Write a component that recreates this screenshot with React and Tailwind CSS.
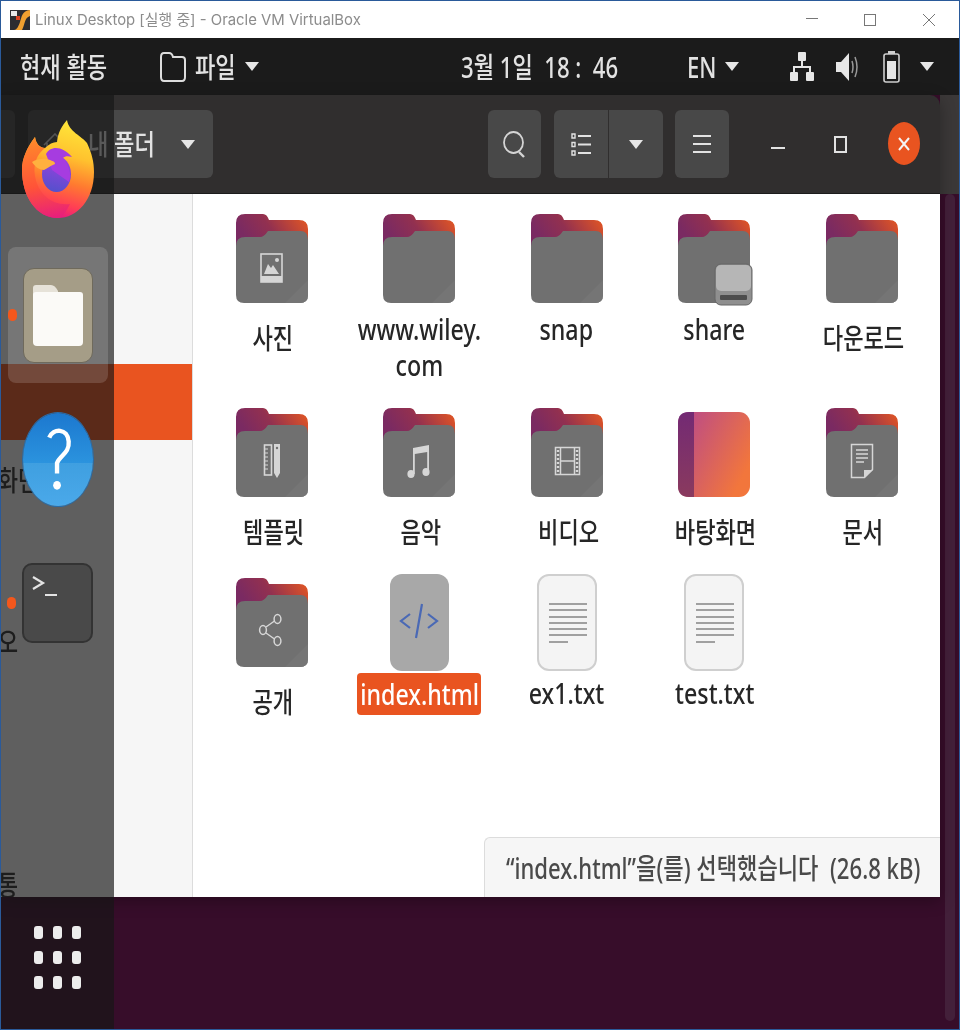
import React from 'react';

const Squeeze = ({ children, latin, className = '' }) => (
  <span className={`inline-block whitespace-pre ${latin ? 'scale-x-[0.83]' : 'scale-x-[0.79]'} ${className}`}>{children}</span>
);

const Triangle = ({ className = '' }) => (
  <svg viewBox="0 0 14 9" className={`w-[14px] h-[9px] shrink-0 ${className}`}>
    <polygon points="0,0 14,0 7,9" fill="#e6e6e6" />
  </svg>
);

const emblems = {
  picture: (
    <g>
      <rect x="25" y="40" width="21" height="28" fill="none" stroke="#d6d6d6" strokeWidth="1.6" />
      <rect x="25" y="62" width="21" height="6" fill="#d6d6d6" />
      <polygon points="28,60 32,50 35,54 37,51 43,60" fill="#d6d6d6" />
      <circle cx="41" cy="46" r="2" fill="#d6d6d6" />
    </g>
  ),
  ruler: (
    <g>
      <rect x="28.5" y="37" width="7" height="30" fill="none" stroke="#d6d6d6" strokeWidth="1.6" />
      <path d="M29 41h3M29 45h3M29 49h3M29 53h3M29 57h3M29 61h3" stroke="#d6d6d6" strokeWidth="1" />
      <path d="M38 36h6v29l-3 5-3-5z" fill="#d6d6d6" />
      <circle cx="41" cy="40" r="1.2" fill="#707070" />
    </g>
  ),
  music: (
    <g fill="#d6d6d6">
      <ellipse cx="28" cy="66" rx="3.6" ry="4" />
      <ellipse cx="43" cy="64" rx="3.6" ry="4" />
      <path d="M30 66V40l16-3v27h-1.8V44l-12.4 2v20z" />
    </g>
  ),
  film: (
    <g>
      <rect x="24.5" y="39.5" width="24" height="27" fill="none" stroke="#d6d6d6" strokeWidth="1.5" />
      <path d="M29.5 39.5v27M43.5 39.5v27M29.5 53h14" stroke="#d6d6d6" strokeWidth="1.5" />
      <path d="M27 42v22M46 42v22" stroke="#d6d6d6" strokeWidth="2.4" strokeDasharray="2 2" />
    </g>
  ),
  doc: (
    <g>
      <path d="M25.5 36.5h21v25l-8 8h-13z" fill="none" stroke="#d6d6d6" strokeWidth="1.5" />
      <path d="M38 70v-8h9z" fill="#d6d6d6" />
      <path d="M30 42h12M30 46h12M30 50h12M30 54h8" stroke="#d6d6d6" strokeWidth="1.6" />
    </g>
  ),
  share: (
    <g fill="none" stroke="#d6d6d6" strokeWidth="1.5">
      <ellipse cx="27" cy="52" rx="3.4" ry="4.4" />
      <ellipse cx="41.5" cy="41" rx="3.4" ry="4.4" />
      <ellipse cx="41.5" cy="63" rx="3.4" ry="4.4" />
      <path d="M30 49l8.5-6M30 55l8.5 6" />
    </g>
  ),
  drive: (
    <g>
      <rect x="37" y="50" width="37" height="41" rx="6" fill="#8f8f8f" stroke="#666666" strokeWidth="1" />
      <rect x="38" y="51" width="35" height="26" rx="5" fill="#b6b6b6" />
      <rect x="42" y="81" width="27" height="5" rx="1" fill="#4c4c4c" />
    </g>
  ),
};

const Folder = ({ emblem, id }) => (
  <svg viewBox="0 0 72 90" className="w-[72px] h-[90px] mt-[4px] overflow-visible">
    <defs>
      <linearGradient id={`back-${id}`} x1="0" y1="0.3" x2="1" y2="0">
        <stop offset="0" stopColor="#7a2a62" />
        <stop offset="0.4" stopColor="#923050" />
        <stop offset="1" stopColor="#ea5a1f" />
      </linearGradient>
    </defs>
    <path d="M0 9Q0 0 9 0H27Q31 0 33 6H63Q72 6 72 15V32H0Z" fill={`url(#back-${id})`} />
    <path d="M0 32Q0 23 9 23H24Q28 23 32 17H63Q72 16 72 26V81Q72 89 64 89H8Q0 89 0 81Z" fill="#707070" />
    <path d="M72 66V81Q72 89 64 89H49Z" fill="#757575" />
    {emblem && emblems[emblem]}
  </svg>
);

const Wallpaper = ({ id }) => (
  <svg viewBox="0 0 72 85" className="w-[72px] h-[85px] mt-[8px]">
    <defs>
      <linearGradient id={id} x1="0" y1="0" x2="1" y2="0.6">
        <stop offset="0" stopColor="#b5468f" />
        <stop offset="1" stopColor="#f2763c" />
      </linearGradient>
      <linearGradient id={`${id}-b`} x1="0" y1="0" x2="0" y2="1">
        <stop offset="0" stopColor="#732a74" />
        <stop offset="1" stopColor="#8a3a5e" />
      </linearGradient>
    </defs>
    <rect width="72" height="85" rx="11" fill={`url(#${id})`} />
    <path d="M16 0H11Q0 0 0 11V74Q0 85 11 85H16Z" fill={`url(#${id}-b)`} />
  </svg>
);

const HtmlFile = () => (
  <div className="w-[59px] h-[97px] rounded-[12px] bg-[#a8a8a8] flex items-center justify-center">
    <svg viewBox="0 0 40 36" className="w-[40px] h-[36px] -mt-[4px]" fill="none" stroke="#4a69b5" strokeWidth="2.2">
      <path d="M11 11L2 18l9 7M29 11l9 7-9 7M23 1l-6 34" />
    </svg>
  </div>
);

const TextFile = () => (
  <div className="w-[60px] h-[97px] rounded-[12px] bg-[#f4f4f4] border-2 border-[#cfcfcf] flex flex-col gap-[4.3px] pt-[27px] pl-[10px]">
    {[38, 38, 38, 38, 38, 38, 19].map((w, i) => (
      <div key={i} className="h-[2px] bg-[#a0a0a0]" style={{ width: w }} />
    ))}
  </div>
);

const Cell = ({ icon, label, ko, selected }) => (
  <div className="flex flex-col items-center">
    <div className="h-[98px] w-full flex justify-center items-start">{icon}</div>
    {selected ? (
      <div className="mt-[1px] w-[124px] h-[42px] rounded-[4px] bg-[#e95420] text-white flex items-center justify-center">
        <Squeeze latin>{label}</Squeeze>
      </div>
    ) : (
      <div className={`text-[#262626] text-center ${ko ? 'mt-[12px] ml-[3px]' : 'mt-[3px]'}`}>
        <Squeeze latin={!ko}>{label}</Squeeze>
      </div>
    )}
  </div>
);

const Firefox = () => (
  <svg viewBox="0 0 72 98" className="w-[72px] h-[98px]">
    <defs>
      <linearGradient id="ff-body" x1="0.65" y1="0" x2="0.45" y2="1">
        <stop offset="0" stopColor="#ffe83a" />
        <stop offset="0.35" stopColor="#ffc22e" />
        <stop offset="0.62" stopColor="#ff7a30" />
        <stop offset="0.85" stopColor="#ff3d55" />
        <stop offset="1" stopColor="#e31587" />
      </linearGradient>
      <linearGradient id="ff-left" x1="0.4" y1="0" x2="0.5" y2="1">
        <stop offset="0" stopColor="#ff8a2a" />
        <stop offset="0.6" stopColor="#ff5338" />
        <stop offset="1" stopColor="#e8207a" />
      </linearGradient>
      <linearGradient id="ff-globe" x1="0.6" y1="0" x2="0.4" y2="1">
        <stop offset="0" stopColor="#a23fe0" />
        <stop offset="1" stopColor="#5450cc" />
      </linearGradient>
    </defs>
    <path d="M45 0C47 12 60 16 65 23C70 34 72 42 72 52C72 80 55 98 36 98C14 98 0 76 0 50C0 38 5 28 13 17C14 24 18 28 23 28C27 24 31 22 35 22C36 12 40 6 45 0Z" fill="url(#ff-body)" />
    <path d="M13 17C14 24 18 28 23 28C15 34 11 44 13 56C16 74 30 86 48 84C44 92 40 98 36 98C14 98 0 76 0 50C0 38 5 28 13 17Z" fill="url(#ff-left)" />
    <ellipse cx="34.5" cy="54" rx="14.5" ry="18" fill="url(#ff-globe)" />
    <path d="M24 34C28 26 40 25 50 37C46 36 43 36 41 38C47 46 50 54 47 62L30 50Z" fill="#a63ce0" />
    <path d="M10 42C16 38 24 38 28 40C30 41 33 41 33 44C28 46 26 48 22 50C18 50 13 47 10 42Z" fill="#ffb03f" />
  </svg>
);

const FilesTile = () => (
  <div className="w-[70px] h-[95px] rounded-[11px] bg-[#a59d87] border border-[#6f6a5c] pt-[16px] pl-[9px]">
    <svg viewBox="0 0 50 61" className="w-[50px] h-[61px]">
      <path d="M3 0H18Q22 0 25 6V20H0V3Q0 0 3 0Z" fill="#e6e2d8" />
      <path d="M0 10Q0 7 3 7H47Q50 7 50 10V57Q50 61 46 61H4Q0 61 0 57Z" fill="#fbfaf7" />
    </svg>
  </div>
);

const HelpIcon = () => (
  <div className="w-[72px] h-[95px] rounded-[50%] overflow-hidden flex flex-col relative border border-[#2b6ca6]">
    <div className="h-[50px] bg-gradient-to-b from-[#1c78cf] to-[#2b93de]" />
    <div className="flex-1 bg-gradient-to-b from-[#3f9fe0] to-[#4aa9ea]" />
    <svg viewBox="0 0 72 95" className="absolute inset-0 w-full h-full" fill="none" stroke="#fff" strokeWidth="4.5">
      <path d="M27 25C31 15 46 15 47 29C48 41 38 43 35 51V62" />
      <ellipse cx="35" cy="74" rx="4" ry="4.5" fill="#fff" stroke="none" />
    </svg>
  </div>
);

const Terminal = () => (
  <div className="w-[71px] h-[80px] rounded-[10px] bg-[#494949] border-2 border-[#333333] pt-[10px] pl-[8px]">
    <svg viewBox="0 0 28 24" className="w-[28px] h-[24px]" fill="none" stroke="#e4e4e4" strokeWidth="2.2">
      <path d="M1 2l10 6-10 6M13 20h12" />
    </svg>
  </div>
);

const Dock = () => (
  <div className="absolute left-0 top-[94px] bottom-0 w-[113px] bg-[#161616]/[0.675] flex flex-col items-center pt-[25px] pb-[40px]">
    <Firefox />
    <div className="relative mt-[29px] w-[100px] h-[136px] rounded-[8px] bg-white/15 flex justify-center pt-[21px]">
      <FilesTile />
      <span className="absolute left-0 top-[62px] w-[9px] h-[12px] rounded-full bg-[#f4571c]" />
    </div>
    <div className="mt-[29px]"><HelpIcon /></div>
    <div className="relative mt-[56px]">
      <Terminal />
      <span className="absolute -left-[15px] top-[34px] w-[9px] h-[12px] rounded-full bg-[#f4571c]" />
    </div>
    <div className="mt-auto grid grid-cols-3 gap-x-[10px] gap-y-[12px]">
      {Array.from({ length: 9 }).map((_, i) => (
        <span key={i} className="w-[9px] h-[13px] rounded-[3px] bg-[#ececec]" />
      ))}
    </div>
  </div>
);

const HeaderButton = ({ className = '', children }) => (
  <div className={`h-[68px] bg-[#484848] flex items-center justify-center ${className}`}>{children}</div>
);

export default function App() {
  const labelFont = "font-['Noto_Sans','Noto_Sans_CJK_KR',sans-serif]";
  return (
    <div className={`relative w-[960px] h-[1030px] overflow-hidden flex flex-col border border-[#2a5a9a] bg-[#370d2a] text-[28px] leading-[36px] font-medium blur-[0.5px] ${labelFont}`}>
      {/* virtualbox title bar */}
      <div className="h-[37px] shrink-0 bg-white flex items-center pl-[9px]">
        <svg viewBox="0 0 20 20" className="w-[20px] h-[20px]">
          <rect width="20" height="20" fill="#2c2c30" />
          <path d="M20 0C12 1 12 6 10 12C9 15 7 20 4 20H12C15 15 14 8 20 6Z" fill="#f0a030" />
          <rect x="1" y="1" width="6" height="5" fill="#e8e8e8" />
          <rect x="6" y="6" width="4" height="4" fill="#d8401f" />
        </svg>
        <span className="ml-[5px] text-[14.9px] leading-[20px] font-normal text-[#8c8c8c] font-['Inter','Noto_Sans_CJK_KR',sans-serif]">Linux Desktop [실행 중] - Oracle VM VirtualBox</span>
        <svg viewBox="0 0 130 14" className="ml-auto mr-[23px] w-[130px] h-[14px]" fill="none" stroke="#777777" strokeWidth="1">
          <path d="M0 5.5H12" />
          <rect x="58.5" y="1.5" width="11" height="11" />
          <path d="M117 1l12 12M129 1l-12 12" />
        </svg>
      </div>

      {/* ubuntu top bar */}
      <div className="h-[57px] shrink-0 bg-[#1b1b1b] flex items-center text-[#e2e2e2] pl-[19px]">
        <div className="w-[140px]"><Squeeze className="origin-left">현재 활동</Squeeze></div>
        <svg viewBox="0 0 26 30" className="w-[26px] h-[30px]" fill="none" stroke="#dddddd" strokeWidth="2">
          <path d="M1 5Q1 1 4 1H9Q12 1 13 5H22Q25 5 25 8V25Q25 29 22 29H4Q1 29 1 25Z" />
        </svg>
        <div className="w-[50px] ml-[9px]"><Squeeze className="origin-left">파일</Squeeze></div>
        <Triangle />
        <div className="w-[202px]" />
        <div className="w-[226px]"><Squeeze className="origin-left">3월 1일  18 :  46</Squeeze></div>
        <div className="w-[38px]"><Squeeze className="origin-left">EN</Squeeze></div>
        <Triangle />
        <svg viewBox="0 0 24 29" className="ml-[51px] w-[24px] h-[29px]" fill="#e6e6e6">
          <rect x="8" y="0" width="8" height="9" rx="1" />
          <rect x="0" y="20" width="8" height="9" rx="1" />
          <rect x="16" y="20" width="8" height="9" rx="1" />
          <path d="M11 9h2v5h8v6h-2v-4H5v4H3v-6h8z" />
        </svg>
        <svg viewBox="0 0 22 30" className="ml-[22px] w-[22px] h-[30px]">
          <path d="M0 10H5L13 1V29L5 20H0Z" fill="#e6e6e6" />
          <path d="M16 9Q18 15 16 21M19 5Q23 15 19 25" fill="none" stroke="#9a9a9a" strokeWidth="1.5" />
        </svg>
        <svg viewBox="0 0 17 32" className="ml-[25px] w-[17px] h-[32px]">
          <rect x="5" y="0" width="7" height="3" fill="#cfcfcf" />
          <rect x="1" y="3" width="15" height="28" rx="2" fill="none" stroke="#cfcfcf" strokeWidth="1.6" />
          <rect x="4" y="10" width="9" height="18" fill="#e6e6e6" />
        </svg>
        <Triangle className="ml-[20px]" />
      </div>

      {/* nautilus window */}
      <div className="relative flex-1 min-h-0">
        <div className="absolute right-0 top-0 w-[19px] h-[99px] bg-[#3b3838]" />
        <div className="absolute right-[4px] top-[99px] bottom-[8px] w-[10px] rounded-full bg-[#43203a]" />
        <div className="relative w-[939px] h-[802px] flex flex-col rounded-tr-[10px] overflow-hidden shadow-[0_4px_16px_rgba(0,0,0,0.3)]">
          <div className="h-[99px] shrink-0 bg-[#302e2e] border-b border-[#1c1c1c] flex items-start pt-[15px] pr-[20px] text-[#e2e2e2]">
            <HeaderButton className="w-[14px] rounded-r-[6px]" />
            <HeaderButton className="ml-[13px] w-[185px] rounded-[6px] !justify-start">
              <svg viewBox="0 0 24 22" className="ml-[15px] w-[24px] h-[22px]" fill="none" stroke="#d0d0d0" strokeWidth="1.6">
                <path d="M1 12L12 1l11 11M4 10v11h16V10" />
              </svg>
              <div className="ml-[21px] w-[93px]"><Squeeze className="origin-left">내 폴더</Squeeze></div>
              <Triangle />
            </HeaderButton>
            <HeaderButton className="ml-auto w-[53px] rounded-[6px]">
              <svg viewBox="0 0 23 27" className="w-[23px] h-[27px]" fill="none" stroke="#d4d4d4" strokeWidth="1.8">
                <ellipse cx="10.5" cy="11.5" rx="9.5" ry="10.5" />
                <path d="M16 21l5 5" strokeWidth="2.4" />
              </svg>
            </HeaderButton>
            <HeaderButton className="ml-[13px] w-[54px] rounded-l-[6px]">
              <svg viewBox="0 0 20 23" className="w-[20px] h-[23px]" fill="none" stroke="#e2e2e2">
                <path d="M7 3h13M7 11.5h13M7 20h13" strokeWidth="1.8" />
                <path d="M1 1h3v4H1zM1 9.5h3v4H1zM1 18h3v4H1z" strokeWidth="1.4" />
              </svg>
            </HeaderButton>
            <HeaderButton className="ml-[1px] w-[54px] rounded-r-[6px]"><Triangle /></HeaderButton>
            <HeaderButton className="ml-[12px] w-[54px] rounded-[6px]">
              <svg viewBox="0 0 18 20" className="w-[18px] h-[20px]" stroke="#e2e2e2" strokeWidth="1.8">
                <path d="M0 2h18M0 10h18M0 18h18" />
              </svg>
            </HeaderButton>
            <div className="ml-[42px] mt-[37px] w-[14px] h-[2px] bg-[#e2e2e2]" />
            <div className="ml-[49px] mt-[26px] w-[13px] h-[17px] border-2 border-[#e2e2e2]" />
            <div className="ml-[41px] mt-[12px] w-[32px] h-[43px] rounded-[50%] bg-[#e95420] flex items-center justify-center">
              <svg viewBox="0 0 12 14" className="w-[12px] h-[14px]" stroke="#f4f4f4" strokeWidth="2">
                <path d="M1 1l10 12M11 1L1 13" />
              </svg>
            </div>
          </div>

          <div className="relative flex-1 min-h-0 flex bg-white">
            {/* sidebar, mostly scrolled off the left edge */}
            <div className="w-[192px] shrink-0 bg-[#f6f6f6] border-r border-[#dcdcdc] text-[#2c2c2c] overflow-hidden whitespace-nowrap">
              <div className="mt-[170px] h-[76px] bg-[#e95420]" />
              <div className="mt-[22px] -ml-[44px]"><Squeeze className="origin-left">바탕화면</Squeeze></div>
              <div className="mt-[126px] -ml-[44px]"><Squeeze className="origin-left">비디오</Squeeze></div>
              <div className="mt-[207px] -ml-[44px]"><Squeeze className="origin-left">휴지통</Squeeze></div>
            </div>

            <div className="flex-1 pl-[5px] pt-[16px] grid grid-cols-[repeat(5,147.5px)] grid-rows-[194px_170px_auto] justify-start content-start">
              <Cell icon={<Folder id="a" emblem="picture" />} label="사진" ko />
              <Cell icon={<Folder id="b" />} label={'www.wiley.\ncom'} />
              <Cell icon={<Folder id="c" />} label="snap" />
              <Cell icon={<Folder id="d" emblem="drive" />} label="share" />
              <Cell icon={<Folder id="e" />} label="다운로드" ko />
              <Cell icon={<Folder id="f" emblem="ruler" />} label="템플릿" ko />
              <Cell icon={<Folder id="g" emblem="music" />} label="음악" ko />
              <Cell icon={<Folder id="h" emblem="film" />} label="비디오" ko />
              <Cell icon={<Wallpaper id="wall" />} label="바탕화면" ko />
              <Cell icon={<Folder id="i" emblem="doc" />} label="문서" ko />
              <Cell icon={<Folder id="j" emblem="share" />} label="공개" ko />
              <Cell icon={<HtmlFile />} label="index.html" selected />
              <Cell icon={<TextFile />} label="ex1.txt" />
              <Cell icon={<TextFile />} label="test.txt" />
            </div>

            <div className="absolute right-0 bottom-0 w-[456px] h-[60px] bg-[#f6f6f6] border-l border-t border-[#dcdcdc] rounded-tl-[6px] flex items-center pl-[21px] text-[#4a4a4a]">
              <Squeeze className="origin-left">“index.html”을(를) 선택했습니다  (26.8 kB)</Squeeze>
            </div>
          </div>
        </div>
      </div>

      <Dock />
    </div>
  );
}
